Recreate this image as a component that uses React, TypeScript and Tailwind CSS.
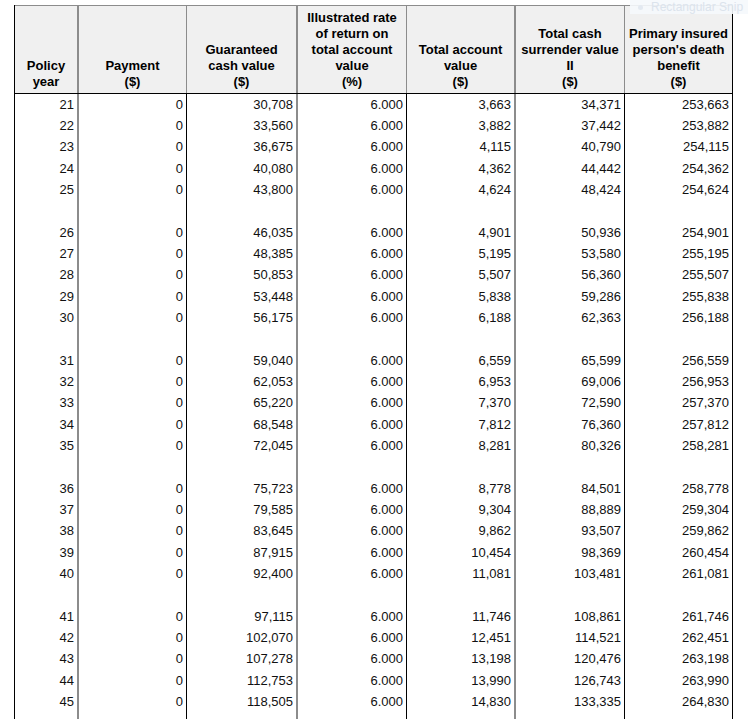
import React from "react";

type Row = [string, string, string, string, string, string, string];

const groups: Row[][] = [
  [
    ["21", "0", "30,708", "6.000", "3,663", "34,371", "253,663"],
    ["22", "0", "33,560", "6.000", "3,882", "37,442", "253,882"],
    ["23", "0", "36,675", "6.000", "4,115", "40,790", "254,115"],
    ["24", "0", "40,080", "6.000", "4,362", "44,442", "254,362"],
    ["25", "0", "43,800", "6.000", "4,624", "48,424", "254,624"],
  ],
  [
    ["26", "0", "46,035", "6.000", "4,901", "50,936", "254,901"],
    ["27", "0", "48,385", "6.000", "5,195", "53,580", "255,195"],
    ["28", "0", "50,853", "6.000", "5,507", "56,360", "255,507"],
    ["29", "0", "53,448", "6.000", "5,838", "59,286", "255,838"],
    ["30", "0", "56,175", "6.000", "6,188", "62,363", "256,188"],
  ],
  [
    ["31", "0", "59,040", "6.000", "6,559", "65,599", "256,559"],
    ["32", "0", "62,053", "6.000", "6,953", "69,006", "256,953"],
    ["33", "0", "65,220", "6.000", "7,370", "72,590", "257,370"],
    ["34", "0", "68,548", "6.000", "7,812", "76,360", "257,812"],
    ["35", "0", "72,045", "6.000", "8,281", "80,326", "258,281"],
  ],
  [
    ["36", "0", "75,723", "6.000", "8,778", "84,501", "258,778"],
    ["37", "0", "79,585", "6.000", "9,304", "88,889", "259,304"],
    ["38", "0", "83,645", "6.000", "9,862", "93,507", "259,862"],
    ["39", "0", "87,915", "6.000", "10,454", "98,369", "260,454"],
    ["40", "0", "92,400", "6.000", "11,081", "103,481", "261,081"],
  ],
  [
    ["41", "0", "97,115", "6.000", "11,746", "108,861", "261,746"],
    ["42", "0", "102,070", "6.000", "12,451", "114,521", "262,451"],
    ["43", "0", "107,278", "6.000", "13,198", "120,476", "263,198"],
    ["44", "0", "112,753", "6.000", "13,990", "126,743", "263,990"],
    ["45", "0", "118,505", "6.000", "14,830", "133,335", "264,830"],
  ],
];

const bodyBorders = [
  "border-r-2 border-[#8c8c8c]",
  "border-r border-black",
  "border-r-2 border-[#8c8c8c]",
  "border-r border-black",
  "border-r-2 border-[#8c8c8c]",
  "border-r border-black",
  "border-r border-black",
];

const headBorders = [
  "border-r-2 border-[#8c8c8c]",
  "border-r border-[#8c8c8c]",
  "border-r-2 border-[#8c8c8c]",
  "border-r border-[#8c8c8c]",
  "border-r-2 border-[#8c8c8c]",
  "border-r border-[#8c8c8c]",
  "border-r border-black",
];

const headers: string[][] = [
  ["Policy", "year"],
  ["Payment", "($)"],
  ["Guaranteed", "cash value", "($)"],
  ["Illustrated rate", "of return on", "total account", "value", "(%)"],
  ["Total account", "value", "($)"],
  ["Total cash", "surrender value", "II", "($)"],
  ["Primary insured", "person's death", "benefit", "($)"],
];

const gridCols =
  "grid grid-cols-[64px_108px_111px_109px_109px_109px_108px]";

function DataRow({ row }: { row: Row | null }) {
  return (
    <div className={`${gridCols} h-[21.33px]`}>
      {bodyBorders.map((b, i) => (
        <div
          key={i}
          className={`${b} box-border flex items-center justify-end pr-[3px] text-[13px] leading-[16px] text-[#111]`}
        >
          {row ? row[i] : ""}
        </div>
      ))}
    </div>
  );
}

export default function App() {
  return (
    <div
      className="relative min-h-[719px] bg-white pt-[5px] pl-[14px]"
      style={{ fontFamily: '"Liberation Sans", Arial, sans-serif' }}
    >
      <div className="w-[719px] border-l border-black">
        <div
          className={`${gridCols} h-[89px] border-t border-b border-t-[#8c8c8c] border-b-black bg-[#f0f0f0]`}
        >
          {headers.map((lines, i) => (
            <div
              key={i}
              className={`${headBorders[i]} box-border flex flex-col items-center justify-end pb-[3px] text-center text-[13px] font-bold leading-[16px] text-black`}
            >
              {lines.map((l, j) => (
                <span key={j} className="whitespace-nowrap">
                  {l}
                </span>
              ))}
            </div>
          ))}
        </div>
        {groups.map((g, gi) => (
          <div key={gi}>
            {g.map((r, ri) => (
              <DataRow key={ri} row={r} />
            ))}
            <DataRow row={null} />
          </div>
        ))}
      </div>
      <div className="absolute right-0 top-0 flex h-[14px] w-[118px] items-center gap-[8px] bg-[#f5f8fc]/90 pl-[8px]">
        <span className="h-[5px] w-[5px] shrink-0 rounded-full bg-[#e3e9f1]" />
        <span className="whitespace-nowrap text-[12px] leading-[14px] text-[#dbe3ec]">
          Rectangular Snip
        </span>
      </div>
    </div>
  );
}
